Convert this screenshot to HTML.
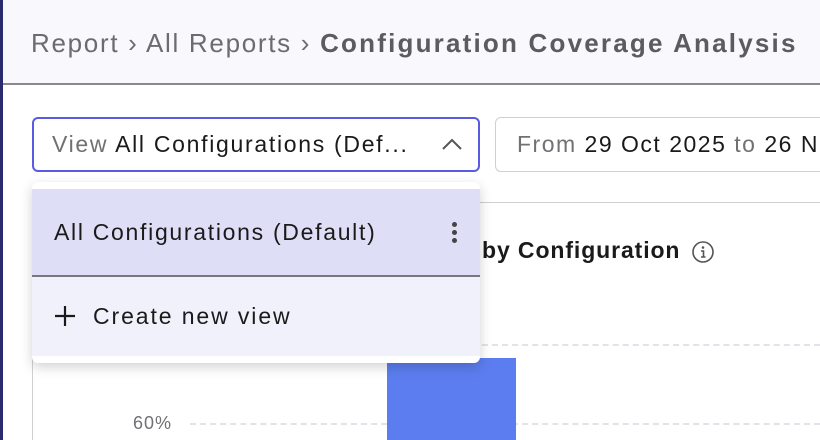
<!DOCTYPE html>
<html style="overflow:hidden;width:820px;height:440px"><head><style>
*{margin:0;padding:0;box-sizing:border-box}
body{width:820px;height:440px;overflow:hidden;background:#fff;font-family:"Liberation Sans",sans-serif;position:relative}
.abs{position:absolute}
</style></head><body>
<div class="abs" style="left:0;top:0;width:3px;height:440px;background:#2a2a6e"></div>
<div class="abs" style="left:3px;top:0;width:817px;height:85px;background:#f8f8fd;border-bottom:2px solid #8a8a8e"></div>
<div class="abs" style="left:31px;top:28px;font-size:26px;color:#6b6b70;white-space:nowrap;letter-spacing:1.7px">Report › All Reports › <b style="color:#5b5b60;letter-spacing:2.2px">Configuration Coverage Analysis</b></div>

<div class="abs" style="left:32px;top:117px;width:448px;height:55px;border:2px solid #5b5be0;border-radius:6px"></div>
<div class="abs" style="left:52px;top:131px;font-size:23px;color:#1a1a1a;white-space:nowrap;letter-spacing:1.7px"><span style="color:#707075">View</span> All Configurations (Def...</div>
<svg class="abs" style="left:440px;top:136px" width="24" height="16"><path d="M3 13 L12 4 L21 13" stroke="#555" stroke-width="2" fill="none"/></svg>

<div class="abs" style="left:495px;top:117px;width:340px;height:55px;border:1px solid #cfcfd4;border-radius:6px"></div>
<div class="abs" style="left:517px;top:131px;font-size:23px;color:#1a1a1a;white-space:nowrap;letter-spacing:1.5px"><span style="color:#707075">From</span> 29 Oct 2025 <span style="color:#707075">to</span> 26 N</div>

<div class="abs" style="left:32px;top:202px;width:800px;height:250px;border:1px solid #d0d0d4;border-radius:6px"></div>
<div class="abs" style="left:482px;top:237px;font-size:23px;color:#1a1a1a;font-weight:bold;white-space:nowrap;letter-spacing:0.9px">by Configuration</div>
<svg class="abs" style="left:691px;top:240px" width="24" height="24"><circle cx="12" cy="12" r="10" stroke="#555" stroke-width="1.6" fill="none"/><circle cx="12" cy="7.5" r="1.3" fill="#555"/><path d="M10 11 H12.5 V17 M10 17 H14.5" stroke="#555" stroke-width="1.6" fill="none"/></svg>
<div class="abs" style="left:190px;top:344px;width:630px;border-top:2px dashed #e2e2ea"></div>
<div class="abs" style="left:190px;top:423px;width:630px;border-top:2px dashed #e2e2ea"></div>
<div class="abs" style="left:387px;top:358px;width:129px;height:90px;background:#5b7def"></div>
<div class="abs" style="left:133px;top:413px;font-size:18px;color:#707075;letter-spacing:1px">60%</div>

<div class="abs" style="left:32px;top:182px;width:448px;height:181px;background:#fff;border-radius:6px;box-shadow:0 4px 12px rgba(0,0,0,0.18);overflow:hidden">
 <div style="position:absolute;left:0;top:7px;width:448px;height:88px;background:#dedef7;border-bottom:2px solid #77777c"></div>
 <div style="position:absolute;left:0;top:95px;width:448px;height:79px;background:#f1f1fb"></div>
 <div style="position:absolute;left:22px;top:37px;font-size:23px;color:#1a1a1a;white-space:nowrap;letter-spacing:1.7px">All Configurations (Default)</div>
 <div style="position:absolute;left:420px;top:40px;width:5px;height:5px;border-radius:50%;background:#444;box-shadow:0 8px 0 #444,0 16px 0 #444"></div>
 <svg style="position:absolute;left:21px;top:122px" width="24" height="24"><path d="M12 2 V22 M2 12 H22" stroke="#1a1a1a" stroke-width="2.2"/></svg>
 <div style="position:absolute;left:61px;top:121px;font-size:23px;color:#1a1a1a;white-space:nowrap;letter-spacing:1.9px">Create new view</div>
</div>
</body></html>
